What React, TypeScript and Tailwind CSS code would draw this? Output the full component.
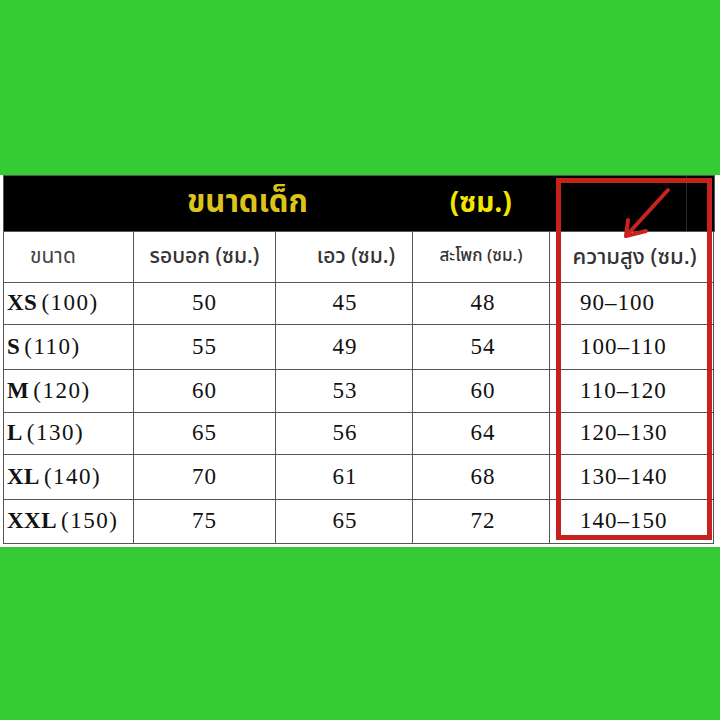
import React from "react";

type Row = {
  size: string;
  height: string;
  chest: string;
  waist: string;
  hip: string;
  range: string;
  h: string;
};

const rows: Row[] = [
  { size: "XS", height: "(100)", chest: "50", waist: "45", hip: "48", range: "90–100", h: "h-[42px]" },
  { size: "S", height: "(110)", chest: "55", waist: "49", hip: "54", range: "100–110", h: "h-[45px]" },
  { size: "M", height: "(120)", chest: "60", waist: "53", hip: "60", range: "110–120", h: "h-[43px]" },
  { size: "L", height: "(130)", chest: "65", waist: "56", hip: "64", range: "120–130", h: "h-[42px]" },
  { size: "XL", height: "(140)", chest: "70", waist: "61", hip: "68", range: "130–140", h: "h-[45px]" },
  { size: "XXL", height: "(150)", chest: "75", waist: "65", hip: "72", range: "140–150", h: "h-[44px]" },
];

const thai = "font-['Noto_Sans_Thai','Noto_Sans','DejaVu_Sans',sans-serif]";
const serif = "font-['Liberation_Serif','DejaVu_Serif',serif]";
const cols = "grid grid-cols-[130px_142px_137px_137px_164px]";
const cell = "flex items-center border-r border-b border-[#555]";

function ArrowMark() {
  return (
    <svg
      className="absolute left-[618px] top-[184px]"
      width="58"
      height="60"
      viewBox="0 0 58 60"
      fill="none"
    >
      <path
        d="M50 6 L8 52"
        stroke="#c8231e"
        strokeWidth="4"
        strokeLinecap="round"
      />
      <path
        d="M10 36 L8 52 L28 47"
        stroke="#c8231e"
        strokeWidth="4"
        strokeLinecap="round"
        strokeLinejoin="round"
      />
    </svg>
  );
}

export default function App() {
  return (
    <div className="h-[720px] w-[720px] bg-[#35cb35] pt-[175px]">
      <div className="relative bg-white pb-[3px] pl-[3px] pr-[5px]">
        <div className="border-l border-t border-[#555]">
          <div className="flex h-[56px] items-center border-r border-b border-[#555] bg-black">
            <span className={`${thai} ml-[183px] text-[31px] font-bold text-[#dcc41c]`}>
              ขนาดเด็ก
            </span>
            <span className={`${thai} ml-[142px] text-[28px] font-bold text-[#f3e500]`}>
              (ซม.)
            </span>
            <div className="ml-auto h-full w-[28px] border-l border-[#2a2a2a]" />
          </div>

          <div className={`${cols} h-[51px]`}>
            <div className={`${cell} ${thai} pl-[26px] text-[21px] text-[#444]`}>ขนาด</div>
            <div className={`${cell} ${thai} justify-center text-[21px] font-medium text-[#333]`}>
              รอบอก (ซม.)
            </div>
            <div className={`${cell} ${thai} justify-center pl-[24px] text-[21px] font-medium text-[#333]`}>
              เอว (ซม.)
            </div>
            <div className={`${cell} ${thai} justify-center text-[17px] font-medium text-[#333]`}>
              สะโพก (ซม.)
            </div>
            <div className={`${cell} ${thai} justify-center pl-[6px] text-[22px] font-medium text-[#333]`}>
              ความสูง (ซม.)
            </div>
          </div>

          {rows.map((r) => (
            <div
              key={r.size}
              className={`${cols} ${r.h} ${serif} text-[23px] tracking-[1px] text-[#111]`}
            >
              <div className={`${cell} pl-[3px]`}>
                <span className="font-bold tracking-[0.5px]">{r.size}</span>
                <span className="ml-[4px] tracking-[1.5px]">{r.height}</span>
              </div>
              <div className={`${cell} justify-center`}>{r.chest}</div>
              <div className={`${cell} justify-center pl-[2px]`}>{r.waist}</div>
              <div className={`${cell} justify-center pl-[4px]`}>{r.hip}</div>
              <div className={`${cell} pl-[30px]`}>{r.range}</div>
            </div>
          ))}
        </div>

        <div className="absolute left-[556px] top-[3px] h-[362px] w-[156px] border-[5px] border-[#c3221d]" />
        <div className="absolute left-0 top-[-175px]">
          <ArrowMark />
        </div>
      </div>
    </div>
  );
}
